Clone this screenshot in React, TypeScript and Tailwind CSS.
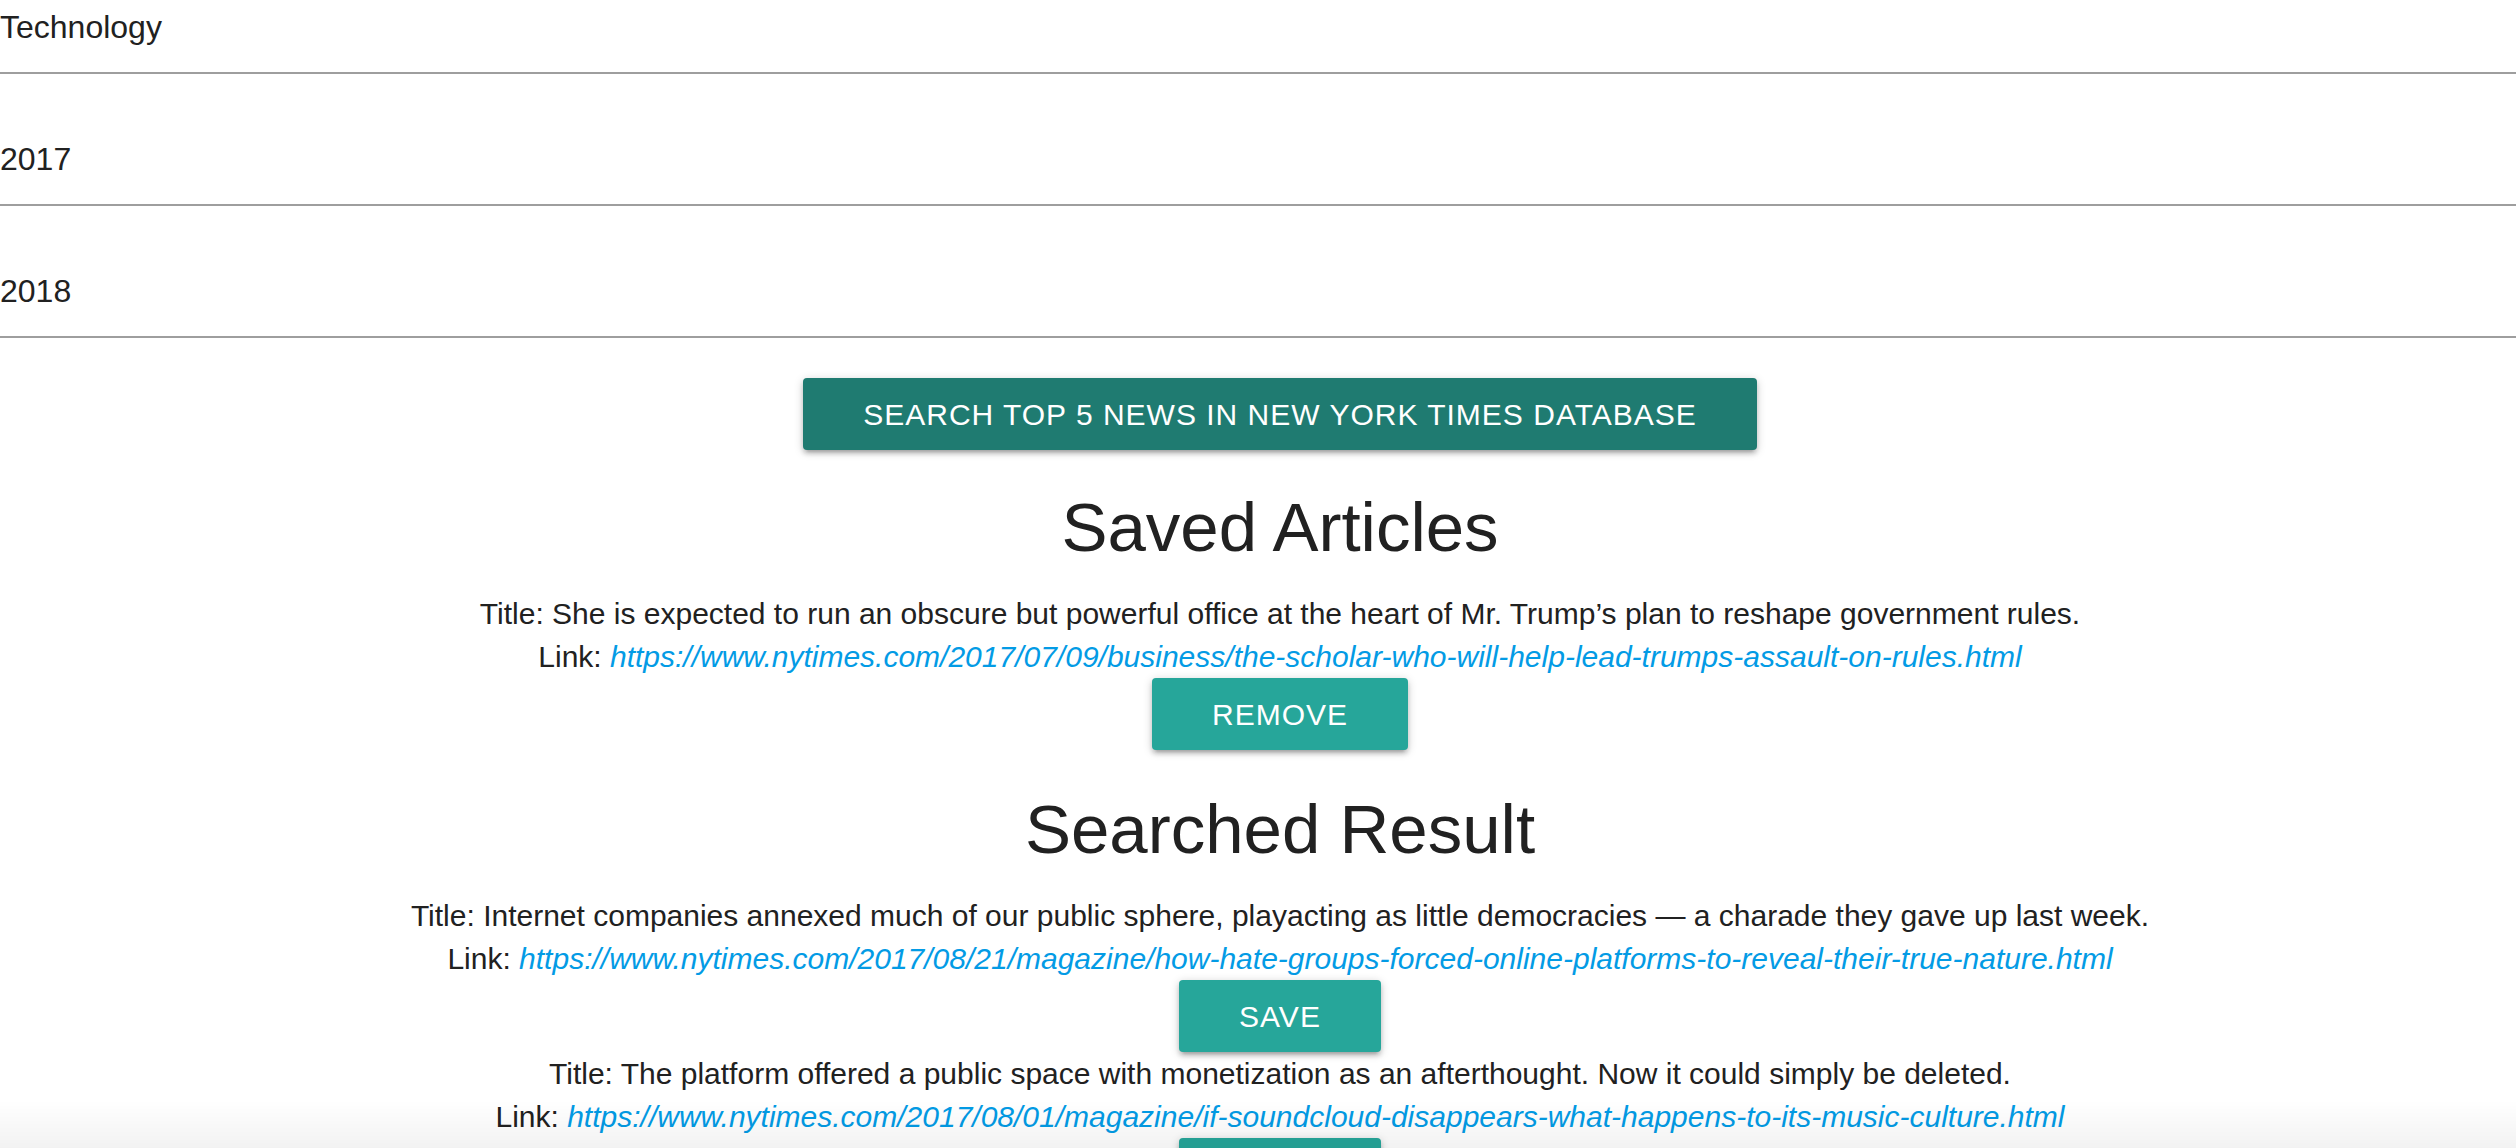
const FILTERS = ['Technology', '2017', '2018'];

type Article = { title: string; url: string };

const SAVED: Article[] = [
  {
    title:
      'She is expected to run an obscure but powerful office at the heart of Mr. Trump’s plan to reshape government rules.',
    url: 'https://www.nytimes.com/2017/07/09/business/the-scholar-who-will-help-lead-trumps-assault-on-rules.html',
  },
];

const RESULTS: Article[] = [
  {
    title:
      'Internet companies annexed much of our public sphere, playacting as little democracies — a charade they gave up last week.',
    url: 'https://www.nytimes.com/2017/08/21/magazine/how-hate-groups-forced-online-platforms-to-reveal-their-true-nature.html',
  },
  {
    title:
      'The platform offered a public space with monetization as an afterthought. Now it could simply be deleted.',
    url: 'https://www.nytimes.com/2017/08/01/magazine/if-soundcloud-disappears-what-happens-to-its-music-culture.html',
  },
];

const btnShadow =
  'shadow-[0_4px_4px_0_rgba(0,0,0,0.14),0_6px_2px_-4px_rgba(0,0,0,0.12),0_2px_10px_0_rgba(0,0,0,0.2)]';

function ArticleItem({ article, action }: { article: Article; action: string }) {
  return (
    <div className="flex flex-col items-center">
      <div className="text-[30px] leading-[43px]">Title: {article.title}</div>
      <div className="text-[30px] leading-[43px]">
        Link:{' '}
        <a href={article.url} className="italic text-[#039be5]">
          {article.url}
        </a>
      </div>
      <button
        className={`h-[72px] px-[60px] rounded bg-[#26a69a] text-white text-[30px] tracking-[1px] uppercase ${btnShadow}`}
      >
        {action}
      </button>
    </div>
  );
}

export default function App() {
  return (
    <div
      className="w-full min-h-screen overflow-hidden bg-white text-[#212121]"
      style={{ fontFamily: '"Liberation Sans", Arial, sans-serif' }}
    >
      <div className="w-[2560px]">
        {/* Filter inputs */}
        <div className="flex flex-col">
          {FILTERS.map((f, i) => (
            <div
              key={f}
              className={`border-b-2 border-[#9e9e9e] pb-[29px] ${i === 0 ? 'pt-[11px]' : 'pt-[69px]'}`}
            >
              <div className="text-[32px] leading-[32px]">{f}</div>
            </div>
          ))}
        </div>

        <div className="flex flex-col items-center">
          <button
            className={`mt-[40px] h-[72px] px-[60px] rounded bg-[#1f7b71] text-white text-[30px] tracking-[1px] uppercase ${btnShadow}`}
          >
            Search Top 5 News in New York Times Database
          </button>

          <h4 className="mt-[40px] mb-[26px] text-[69px] leading-[76px]">Saved Articles</h4>
          {SAVED.map(a => (
            <ArticleItem key={a.url} article={a} action="Remove" />
          ))}

          <h4 className="mt-[42px] mb-[26px] text-[69px] leading-[76px]">Searched Result</h4>
          <div className="flex flex-col">
            {RESULTS.map(a => (
              <ArticleItem key={a.url} article={a} action="Save" />
            ))}
          </div>
        </div>
      </div>

      {/* bottom fade from the browser chrome */}
      <div className="fixed bottom-0 left-0 right-0 h-[48px] pointer-events-none bg-gradient-to-b from-transparent to-black/5" />
    </div>
  );
}
